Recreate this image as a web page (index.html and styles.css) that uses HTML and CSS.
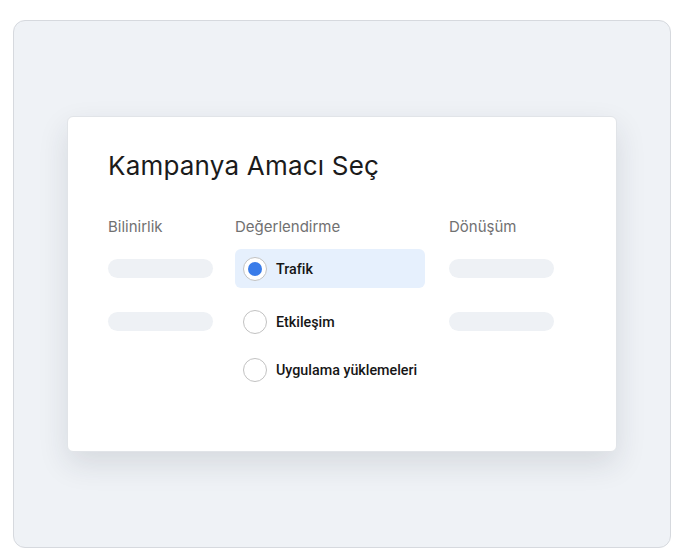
FILE: index.html
```html
<!DOCTYPE html>
<html lang="tr">
<head>
  <meta charset="UTF-8">
  <meta name="viewport" content="width=device-width, initial-scale=1.0">
  <link rel="stylesheet" href="styles.css">
</head>
<body>
  <div class="frame">
    <div class="card">
      <h1 class="title">Kampanya Amacı Seç</h1>
      <div class="columns">
        <div class="column">
          <div class="col-label">Bilinirlik</div>
          <div class="row"><span class="bar"></span></div>
          <div class="row"><span class="bar"></span></div>
        </div>
        <div class="column">
          <div class="col-label">Değerlendirme</div>
          <div class="row option selected">
            <span class="radio"></span>
            <span class="option-text">Trafik</span>
          </div>
          <div class="row option">
            <span class="radio"></span>
            <span class="option-text">Etkileşim</span>
          </div>
          <div class="row option last">
            <span class="radio"></span>
            <span class="option-text">Uygulama yüklemeleri</span>
          </div>
        </div>
        <div class="column">
          <div class="col-label">Dönüşüm</div>
          <div class="row"><span class="bar"></span></div>
          <div class="row"><span class="bar"></span></div>
        </div>
      </div>
    </div>
  </div>
</body>
</html>
```

FILE: styles.css
```css
* {
  box-sizing: border-box;
}

body {
  margin: 0;
  background: #ffffff;
  font-family: 'Inter', 'Noto Sans', sans-serif;
  padding: 20px 17px 10px 13px;
}

.frame {
  width: 658px;
  height: 528px;
  background: #eff2f6;
  border: 1px solid #d6d9de;
  border-radius: 12px;
  display: flex;
  align-items: center;
  justify-content: center;
}

.card {
  width: 550px;
  height: 336px;
  background: #ffffff;
  border: 1px solid #e1e4e8;
  border-radius: 6px;
  box-shadow: 0 12px 30px rgba(30, 40, 60, 0.12);
  padding: 34px 40px 0 40px;
}

.title {
  margin: 0;
  font-size: 26px;
  line-height: 30px;
  font-weight: 400;
  color: #1b1b1b;
  letter-spacing: 0.2px;
}

.columns {
  display: grid;
  grid-template-columns: 127px 214px 105px;
  margin-top: 36px;
}

.column {
  display: flex;
  flex-direction: column;
}

.col-label {
  font-size: 15px;
  line-height: 20px;
  color: #717171;
  margin-bottom: 12px;
}

.row {
  height: 39px;
  display: flex;
  align-items: center;
  margin-bottom: 14px;
}

.row.last {
  margin-top: -5px;
}

.bar {
  display: block;
  width: 105px;
  height: 19px;
  border-radius: 10px;
  background: #eef1f5;
}

.option {
  width: 190px;
  padding-left: 8px;
  border-radius: 6px;
  gap: 9px;
}

.option.selected {
  background: #e6f0fd;
}

.radio {
  width: 24px;
  height: 24px;
  border-radius: 50%;
  border: 1.5px solid #c2c2c2;
  background: #ffffff;
  display: flex;
  align-items: center;
  justify-content: center;
  flex-shrink: 0;
}

.selected .radio::after {
  content: '';
  width: 14px;
  height: 14px;
  border-radius: 50%;
  background: #3a7ce9;
}

.option-text {
  font-family: 'Roboto', 'Liberation Sans', sans-serif;
  font-size: 14.3px;
  font-weight: 500;
  color: #161616;
  white-space: nowrap;
}
```
